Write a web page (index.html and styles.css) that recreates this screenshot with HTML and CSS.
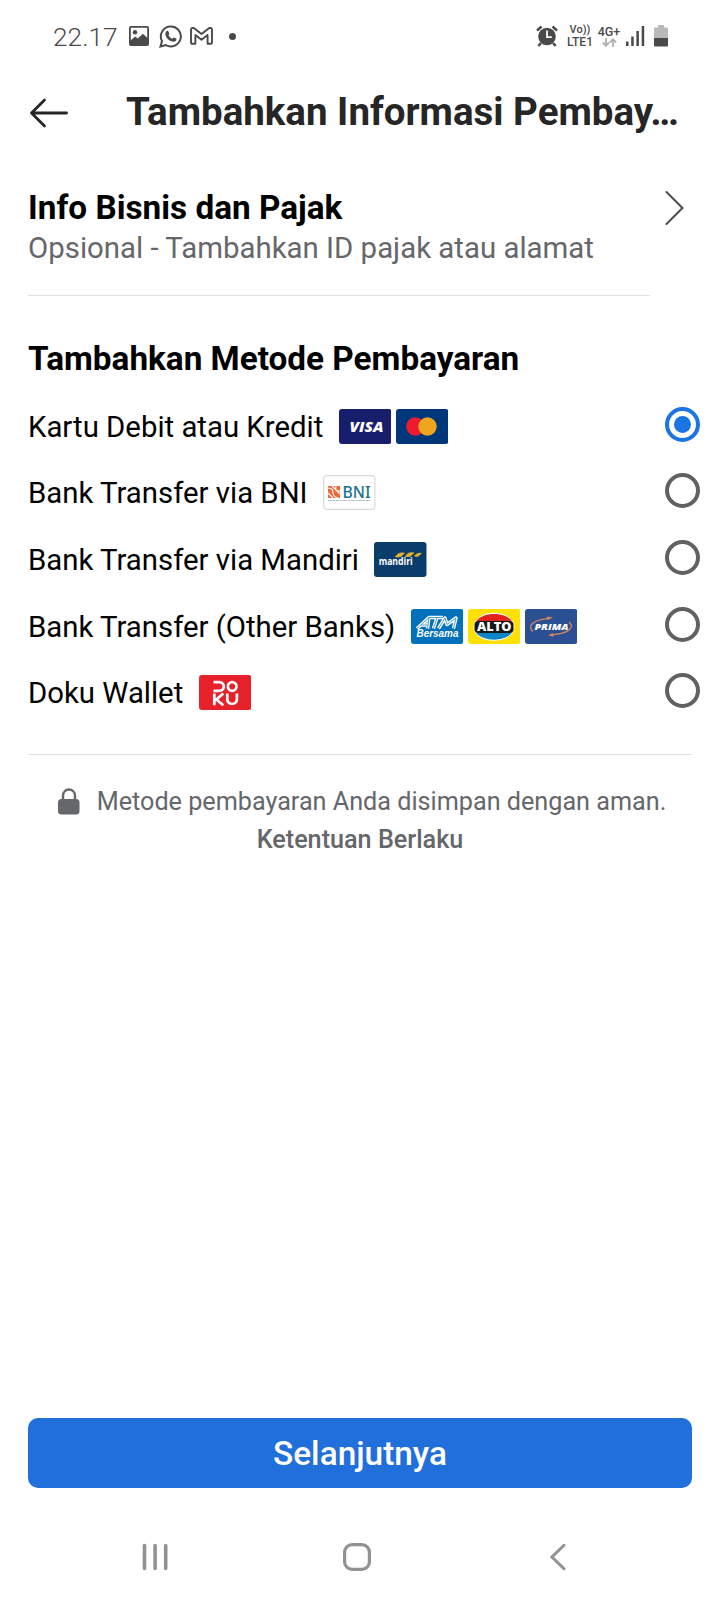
FILE: index.html
```html
<!DOCTYPE html>
<html lang="id">

<head>
    <meta charset="utf-8">
    <meta name="viewport" content="width=device-width, initial-scale=1.0">
    <title>Tambahkan Informasi Pembayaran</title>
    <link rel="stylesheet" href="styles.css">
</head>

<body>
    <div class="statusbar">
        <span class="clock">22.17</span>
        <svg class="picture" width="20" height="20" viewBox="0 0 20 20">
            <path fill="#4a4a4a" fill-rule="evenodd" d="M2 0h16a2 2 0 0 1 2 2v16a2 2 0 0 1-2 2H2a2 2 0 0 1-2-2V2a2 2 0 0 1 2-2zM1.800 1.800v12.400l4.400-3.800 2.600 2.200 5-4.800 4.400 4V1.800z" />
            <circle cx="6" cy="6.300" r="2.200" fill="#4a4a4a" />
        </svg>
        <svg class="whatsapp" width="23" height="23" viewBox="0 0 23 23">
            <path fill="none" stroke="#4a4a4a" stroke-width="2" d="M1.500 21.500l1.500-5.400A10 10 0 1 1 6.700 20z" />
            <path fill="#4a4a4a" d="M7.700 6c.8-.5 1.400-.3 1.700.4l.9 2.100c.2.600-.8 1.500-.8 1.700.8 1.600 2 2.800 3.700 3.500.4.100 1.300-1.400 1.700-1.200l2.300 1.100c.5.300.3 1.800-.5 2.500-1.300 1.100-3 .9-5-.1-2.500-1.200-4.500-3.500-5.100-5.600-.5-1.700-.1-3.500 1.100-4.400z" />
        </svg>
        <svg class="gmail" width="23" height="18" viewBox="0 0 23 18">
            <path fill="none" stroke="#4a4a4a" stroke-width="1.900" stroke-linejoin="round" d="M1 15.500V2.800C1 .8 3.200.4 4.400 1.400l7.100 5.700 7.100-5.700c1.200-1 3.400-.6 3.400 1.400v12.700c0 .9-.5 1.300-1.300 1.300h-3.100V8l-6.100 4.800L5.400 8v8.800H2.300c-.8 0-1.300-.4-1.300-1.300z" />
        </svg>
        <span class="more"></span>

        <svg class="alarm" width="22" height="22" viewBox="0 0 22 22">
            <g fill="none" stroke="#4a4a4a" stroke-width="2.400">
                <path d="M1 5.500l4.500-4M21 5.500l-4.500-4M5 18l-2.700 3M17 18l2.700 3" />
            </g>
            <circle cx="11" cy="11.500" r="8.800" fill="#4a4a4a" />
            <path fill="none" stroke="#fff" stroke-width="1.800" d="M11 5.500v6.700h4.800" />
        </svg>
        <div class="volte"><span class="vo">Vo))</span><span>LTE1</span></div>
        <div class="data">
            <span>4G+</span>
            <svg width="15" height="9" viewBox="0 0 15 9">
                <path fill="none" stroke="#b0b0b0" stroke-width="1.800" d="M4 0v7.500M.8 4.500L4 7.700l3.200-3.200M11 9V1.500M7.800 4.500L11 1.300l3.200 3.200" />
            </svg>
        </div>
        <svg class="signal" width="19" height="20" viewBox="0 0 19 20">
            <path fill="#4a4a4a" d="M0 15.500h2.500V20H0zM5.200 10.500h2.500V20H5.200zM10.400 5h2.500v15h-2.500zM15.700 0h2.500v20h-2.500z" />
        </svg>
        <svg class="battery" width="14" height="22" viewBox="0 0 14 22">
            <path fill="#b9b9b9" d="M4 0h6v2.500h3a1 1 0 0 1 1 1V13H0V3.500a1 1 0 0 1 1-1h3z" />
            <path fill="#4a4a4a" d="M0 13h14v7.500a1 1 0 0 1-1 1H1a1 1 0 0 1-1-1z" />
        </svg>
    </div>

    <header>
        <svg width="40" height="30" viewBox="0 0 40 30">
            <path fill="none" stroke="#262626" stroke-width="2.800" stroke-linecap="round" stroke-linejoin="round" d="M15.500 2L2.500 15l13 13M2.500 15h35" />
        </svg>
        <h1>Tambahkan Informasi Pembay…</h1>
    </header>

    <main>
        <section class="tax">
            <div class="tax-text">
                <h2>Info Bisnis dan Pajak</h2>
                <p>Opsional - Tambahkan ID pajak atau alamat</p>
            </div>
            <svg width="20" height="36" viewBox="0 0 20 36">
                <path fill="none" stroke="#4b4b4b" stroke-width="2" stroke-linecap="round" d="M2.500 2l16 16-16 16" />
            </svg>
        </section>

        <section class="methods">
            <h2>Tambahkan Metode Pembayaran</h2>
            <div class="method">
                <span class="label">Kartu Debit atau Kredit</span>
                <svg class="badge" viewBox="0 0 52.500 35">
                    <rect width="52.500" height="35" rx="3" fill="#171e6c" />
                    <text class="visa" x="10.500" y="22.700" textLength="34" lengthAdjust="spacingAndGlyphs">VISA</text>
                </svg>
                <svg class="badge" viewBox="0 0 52.500 35">
                    <rect width="52.500" height="35" rx="3" fill="#00377b" />
                    <circle cx="19.300" cy="17.500" r="9.200" fill="#ec1c2e" />
                    <circle cx="31.500" cy="17.500" r="9.200" fill="#f0a51e" />
                </svg>
                <span class="radio checked"></span>
            </div>
            <div class="method">
                <span class="label">Bank Transfer via BNI</span>
                <svg class="badge" viewBox="0 0 52.500 35">
                    <rect x=".6" y=".6" width="51.300" height="33.800" rx="3" fill="#fff" stroke="#d9dcdc" stroke-width="1.200" />
                    <path fill="#e8693a" d="M5 11h12v12H5z" />
                    <path fill="none" stroke="#fff" stroke-width="1.100" d="M5 13c4 0 5 2 5 5s3 5 6 5M9 11l8 8M5 18l5 5M13 11c-1 4 0 5 4 5" />
                    <text class="bni" x="19.500" y="22.500" textLength="28" lengthAdjust="spacingAndGlyphs">BNI</text>
                    <path stroke="#b5c0c3" stroke-width="1" stroke-dasharray="4 .6 2.500 .5" d="M5 25.500h42" />
                </svg>
                <span class="radio"></span>
            </div>
            <div class="method">
                <span class="label">Bank Transfer via Mandiri</span>
                <svg class="badge" viewBox="0 0 52.500 35">
                    <rect width="52.500" height="35" rx="3" fill="#0b3d6b" />
                    <text class="mandiri" x="4.700" y="22.800" textLength="34" lengthAdjust="spacingAndGlyphs">mandiri</text>
                    <path fill="#e9b233" stroke="#e9b233" stroke-width=".8" d="M21.500 15c2-4 5-4.500 9-3.800-2 .5-2 3.500-5 3.600zM31.500 14.600c2-3.800 4.500-4.400 8.500-3.600-2 .5-2 3.300-4.800 3.400zM40.500 13.900c1.500-1.800 3-2.700 6.800-2.700-1.600 1.500-2.400 3.200-4.600 3.200z" />
                </svg>
                <span class="radio"></span>
            </div>
            <div class="method">
                <span class="label">Bank Transfer (Other Banks)</span>
                <svg class="badge" viewBox="0 0 52.500 35">
                    <rect width="52.500" height="35" rx="3" fill="#0071ba" />
                    <g fill="none" stroke="#fff" stroke-width="3.400" stroke-linejoin="round">
                        <path id="atm" d="M6 19.500L18 8.500l-1.500 11M10.500 16h6M18 8.500h14M26 8.500l-3.500 11M27.500 19.500L34 9l2 6.500L45 9l-2.500 10.500" />
                    </g>
                    <use href="#atm" fill="none" stroke="#0071ba" stroke-width=".7" />
                    <text class="bersama" x="5.500" y="28.300" textLength="42" lengthAdjust="spacingAndGlyphs">Bersama</text>
                </svg>
                <svg class="badge" viewBox="0 0 52.500 35">
                    <rect width="52.500" height="35" rx="3" fill="#ffe000" />
                    <ellipse cx="26" cy="17.800" rx="20.500" ry="14" fill="#fff" />
                    <path fill="#e2231f" d="M8 12.500C14 2.500 38 2.500 44 12.500z" />
                    <path fill="#0d86c8" d="M8 23.500C14 33 38 33 44 23.500z" />
                    <rect x="6.500" y="12" width="39" height="12" rx="4" fill="#171717" />
                    <text class="alto" x="9" y="22" textLength="34.500" lengthAdjust="spacingAndGlyphs">ALTO</text>
                </svg>
                <svg class="badge" viewBox="0 0 52.500 35">
                    <rect width="52.500" height="35" rx="3" fill="#2b4f93" />
                    <path fill="none" stroke="#d7875b" stroke-width="1.300" d="M8 22.500C2 17 7 11 24 9.300M44 13c6 5 1 11.500-18 13" />
                    <path fill="#d7875b" d="M22 7.500l6 1-5.500 2.500zM28 24l-5 2.300 5.500 1.500z" />
                    <text class="prima" x="9.500" y="21.100" textLength="34" lengthAdjust="spacingAndGlyphs">PRIMA</text>
                </svg>
                <span class="radio"></span>
            </div>
            <div class="method">
                <span class="label">Doku Wallet</span>
                <svg class="badge" viewBox="0 0 52.500 35">
                    <rect width="52.500" height="35" rx="3" fill="#e62129" />
                    <g fill="none" stroke="#fff" stroke-width="2.700">
                        <path d="M14.500 7.200h6a4.200 4.200 0 0 1 0 8.600h-6" />
                        <circle cx="33.200" cy="11.500" r="4.300" />
                        <path d="M15.300 18.500v11.800M24.300 18.500l-7 6 7 5.800M28.300 18.500v5.700a4.800 4.800 0 0 0 9.600 0v-5.700" />
                    </g>
                </svg>
                <span class="radio"></span>
            </div>
        </section>

        <div class="secure">
            <p>
                <svg width="22" height="27" viewBox="0 0 22 27">
                    <path fill="none" stroke="#65676b" stroke-width="2.400" d="M5 12V7.500a6 6 0 0 1 12 0V12" />
                    <rect y="11" width="21.500" height="15.500" rx="3.500" fill="#65676b" />
                </svg>
                <span>Metode pembayaran Anda disimpan dengan aman.</span>
            </p>
            <a>Ketentuan Berlaku</a>
        </div>

        <button class="next">Selanjutnya</button>
    </main>

    <nav>
        <svg width="26" height="28" viewBox="0 0 26 28">
            <path stroke="#929292" stroke-width="3.600" stroke-linecap="round" d="M2.500 2.500v23M13.100 2.500v23M23.700 2.500v23" />
        </svg>
        <svg class="home" width="28" height="28" viewBox="0 0 28 28">
            <rect x="1.600" y="1.600" width="24.800" height="24.800" rx="7.500" fill="none" stroke="#929292" stroke-width="3.200" />
        </svg>
        <svg width="16" height="28" viewBox="0 0 16 28">
            <path fill="none" stroke="#929292" stroke-width="3" stroke-linecap="round" d="M14 2.300L2 14l12 11.700" />
        </svg>
    </nav>
</body>

</html>
```

FILE: styles.css
```css
* {
    box-sizing: border-box;
}

body {
    margin: 0;
    height: 1600px;
    display: flex;
    flex-direction: column;
    background: #fff;
    color: #000;
    font-family: Roboto, sans-serif;
}

h1, h2, p {
    margin: 0;
}

svg {
    display: block;
    flex: none;
}

/* status bar */

.statusbar {
    height: 72px;
    padding: 0 52px 0 53px;
    display: flex;
    align-items: center;
    color: #4a4a4a;
}

.clock {
    width: 76px;
    font-size: 26.3px;
    font-weight: 300;
    line-height: 30px;
    padding-top: 1px;
}

.whatsapp {
    margin-left: 10px;
}

.gmail {
    margin-left: 8px;
}

.more {
    width: 7px;
    height: 7px;
    margin-left: 16px;
    border-radius: 50%;
    background: #4a4a4a;
}

.alarm {
    margin-left: auto;
}

.volte, .data {
    display: flex;
    flex-direction: column;
    align-items: center;
    font-size: 12.5px;
    font-weight: 500;
    line-height: 11px;
}

.volte {
    width: 28px;
    margin-left: 8px;
}

.volte span {
    font-size: 12px;
    line-height: 12px;
}

.volte .vo {
    font-size: 11px;
}

.data {
    width: 24px;
    margin-left: 3px;
}

.data svg {
    margin-top: 1px;
}

.signal {
    margin-left: 5px;
}

.battery {
    margin-left: 9px;
}

/* title row */

header {
    height: 78px;
    padding-left: 29px;
    display: flex;
    align-items: center;
}

header svg {
    margin-top: 4px;
}

h1 {
    margin-left: 57px;
    padding-top: 2px;
    font-size: 38.5px;
    font-weight: 700;
    line-height: 44px;
    color: #262626;
    white-space: nowrap;
}

main {
    flex: 1;
    padding: 38px 28px 0;
    display: flex;
    flex-direction: column;
}

h2 {
    font-size: 33.3px;
    font-weight: 700;
    line-height: 40px;
    white-space: nowrap;
}

.tax {
    display: flex;
    justify-content: space-between;
    padding-right: 8px;
}

.tax-text {
    width: 622px;
    height: 108px;
    border-bottom: 1px solid #e0e0e0;
}

.tax-text p {
    font-size: 29.4px;
    line-height: 40px;
    color: #65676b;
    white-space: nowrap;
}

.tax svg {
    margin-top: 2px;
}

/* payment methods */

.methods {
    padding: 43px 0 28px;
    border-bottom: 1px solid #e0e0e0;
}

.methods h2 {
    margin-bottom: 14px;
}

.method {
    height: 66.67px;
    margin-right: -8px;
    display: flex;
    align-items: center;
    gap: 4.5px;
}

.label {
    margin-right: 11px;
    padding-top: 1px;
    font-size: 29.35px;
    line-height: 36px;
    white-space: nowrap;
}

.badge {
    width: 52.5px;
    height: 35px;
}

.radio {
    width: 35px;
    height: 35px;
    margin: 0 0 4px auto;
    border: 4px solid #606163;
    border-radius: 50%;
}

.radio.checked {
    border-color: #1b74e4;
    padding: 5px;
    background: #1b74e4 content-box;
}

.visa, .alto, .prima, .bersama {
    fill: #fff;
    font-family: "Open Sans", sans-serif;
    font-weight: 800;
}

.visa {
    font-size: 14px;
    font-style: italic;
}

.bni {
    fill: #16718c;
    font-family: "Noto Sans", sans-serif;
    font-size: 16px;
    font-weight: 500;
}

.mandiri {
    fill: #fff;
    font-family: "Open Sans", sans-serif;
    font-size: 10.5px;
    font-weight: 700;
}

.bersama {
    font-family: "Liberation Sans", sans-serif;
    font-size: 10px;
    font-weight: 700;
    font-style: italic;
}

.alto {
    font-size: 11.5px;
}

.prima {
    font-size: 8.5px;
    font-style: italic;
}

/* footer */

.secure {
    padding-top: 28px;
    display: flex;
    flex-direction: column;
    align-items: center;
    font-size: 25.2px;
    line-height: 38px;
    color: #65676b;
    white-space: nowrap;
}

.secure p {
    display: flex;
    align-items: center;
    gap: 17px;
    padding-left: 4px;
}

.secure p svg {
    margin-bottom: 1px;
}

.secure a {
    font-weight: 500;
}

.next {
    height: 70px;
    margin-top: auto;
    border: 0;
    border-radius: 10px;
    background: #216fdb;
    color: #fff;
    font-family: inherit;
    font-size: 33.4px;
    font-weight: 500;
}

nav {
    height: 112px;
    padding: 26px 154px 0 142px;
    display: flex;
    align-items: center;
    justify-content: space-between;
}

.home {
    margin-right: 4px;
}
```
